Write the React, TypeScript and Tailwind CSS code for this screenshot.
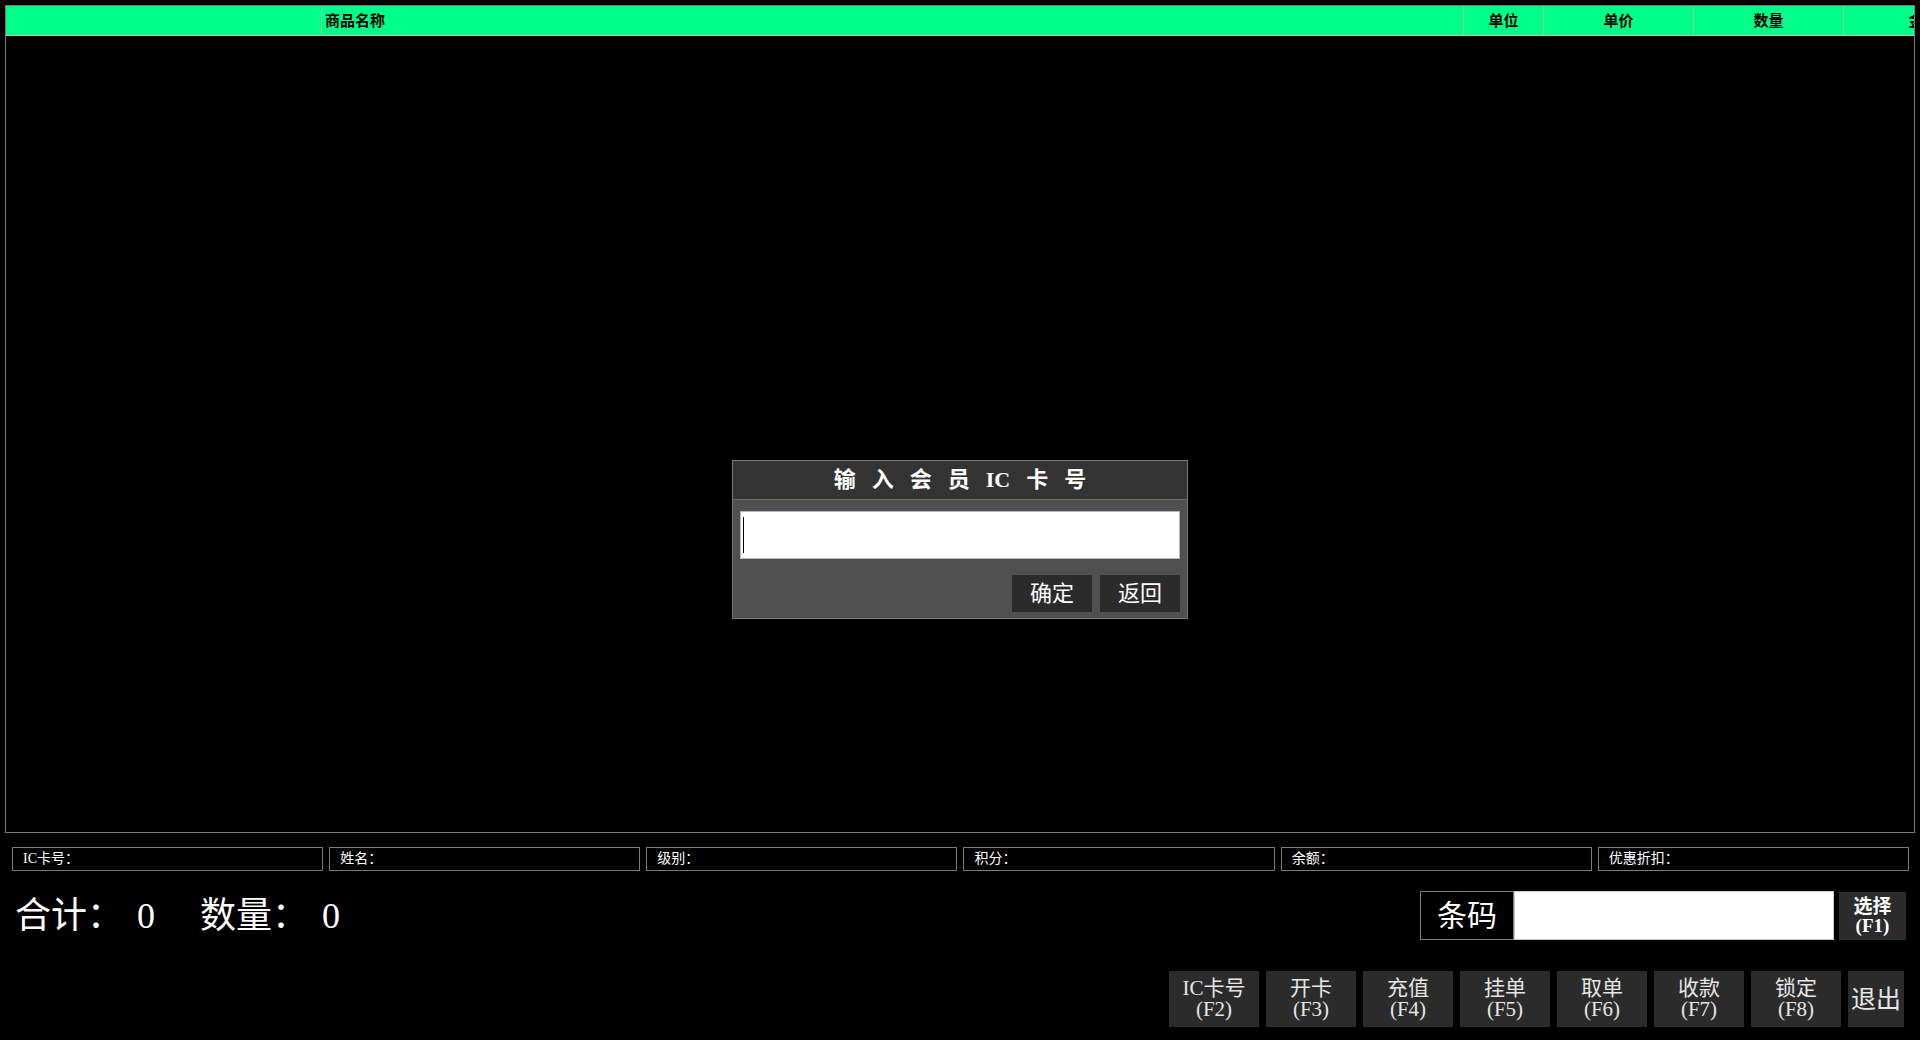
import React from 'react';

const serif = 'font-["Liberation_Serif","Noto_Sans_CJK_SC",serif]';

const columns = [
  { label: '', width: 'w-[316px]', align: 'justify-start' },
  { label: '商品名称', width: 'w-[1142px]', align: 'justify-start pl-[3px]' },
  { label: '单位', width: 'w-[80px]', align: 'justify-center' },
  { label: '单价', width: 'w-[150px]', align: 'justify-center' },
  { label: '数量', width: 'w-[150px]', align: 'justify-center' },
  { label: '金额', width: 'w-[160px]', align: 'justify-center' },
];

const memberFields = ['IC卡号：', '姓名：', '级别：', '积分：', '余额：', '优惠折扣：'];

const actions = [
  { name: 'IC卡号', key: 'F2' },
  { name: '开卡', key: 'F3' },
  { name: '充值', key: 'F4' },
  { name: '挂单', key: 'F5' },
  { name: '取单', key: 'F6' },
  { name: '收款', key: 'F7' },
  { name: '锁定', key: 'F8' },
];

const titleTokens = ['输', '入', '会', '员', 'IC', '卡', '号'];

const CardDialog: React.FC = () => (
  <div className="absolute left-[732px] top-[460px] w-[456px] h-[159px] border border-[#7a7a7a] bg-[#505050] flex flex-col">
    <div className="h-[39px] shrink-0 bg-[#333333] border-b border-[#6a6a6a] flex items-center justify-center gap-[16px] text-white font-bold text-[22px] leading-none">
      {titleTokens.map((t) => (
        <span key={t}>{t}</span>
      ))}
    </div>
    <div className="px-[7px] pt-[11px]">
      <div className="relative h-[48px] bg-white border border-[#b4b4c4]">
        <div className="absolute left-[2px] top-[5px] w-px h-[36px] bg-black" />
      </div>
      <div className="flex justify-end gap-[8px] mt-[16px]">
        <button className="w-[80px] h-[37px] bg-[#2b2b2b] text-white text-[22px] leading-none">确定</button>
        <button className="w-[80px] h-[37px] bg-[#2b2b2b] text-white text-[22px] leading-none">返回</button>
      </div>
    </div>
  </div>
);

export default function App() {
  return (
    <div className={`relative w-[1920px] h-[1040px] bg-black overflow-hidden text-white ${serif}`}>
      {/* product list */}
      <div className="pt-[5px] px-[5px]">
        <div className="h-[828px] border border-[#777777] overflow-hidden">
          <div className="flex h-[30px] bg-[#00ff88] border-b border-[#9ccfb0] font-['Noto_Sans_CJK_SC',sans-serif] font-bold text-[15px] text-black">
            {columns.map((c, i) => (
              <div
                key={i}
                className={`${c.width} shrink-0 flex items-center border-r border-[#8cc8a4] ${c.align}`}
              >
                {c.label}
              </div>
            ))}
          </div>
        </div>
      </div>

      {/* member info */}
      <div className="grid grid-cols-6 gap-[6px] pl-[12px] pr-[11px] mt-[14px]">
        {memberFields.map((f) => (
          <div key={f} className="h-[24px] border border-[#7a7a7a] flex items-center pl-[10px] text-[14px] leading-none">
            {f}
          </div>
        ))}
      </div>

      {/* totals + barcode */}
      <div className="flex items-center justify-between mt-[20px] pl-[15px] pr-[14px] h-[49px]">
        <div className="flex items-center text-[36px] leading-none">
          <span>合计：</span>
          <span className="ml-[14px]">0</span>
          <span className="ml-[45px]">数量：</span>
          <span className="ml-[14px]">0</span>
        </div>
        <div className="flex items-center gap-[5px]">
          <div className="flex h-[49px]">
            <div className="w-[94px] h-full border border-[#7a7a7a] flex items-center justify-center text-[30px] leading-none">
              条码
            </div>
            <div className="w-[320px] h-full bg-white border border-[#c8c8c8]" />
          </div>
          <button className="w-[67px] h-[48px] bg-[#2b2b2b] text-white font-bold text-[19px] leading-[19px] flex flex-col items-center justify-center">
            <span>选择</span>
            <span>(F1)</span>
          </button>
        </div>
      </div>

      {/* function keys */}
      <div className="flex justify-end gap-[7px] mt-[31px] pr-[16px]">
        {actions.map((a) => (
          <button
            key={a.key}
            className="w-[90px] h-[56px] bg-[#2b2b2b] text-[#e6e6e6] text-[21px] leading-[21px] flex flex-col items-center justify-center"
          >
            <span>{a.name}</span>
            <span>({a.key})</span>
          </button>
        ))}
        <button className="w-[56px] h-[56px] bg-[#2b2b2b] text-[#e6e6e6] text-[25px] leading-none flex items-center justify-center">
          退出
        </button>
      </div>

      <CardDialog />
    </div>
  );
}
